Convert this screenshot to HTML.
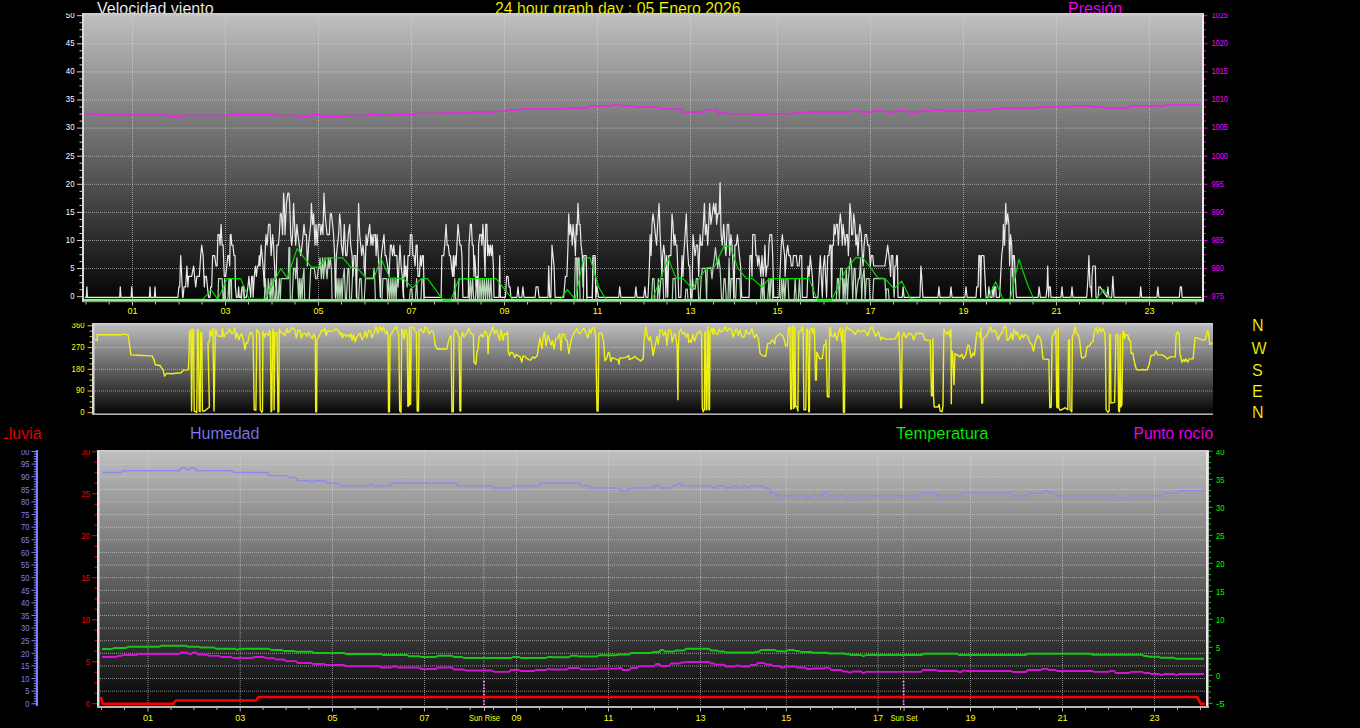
<!DOCTYPE html><html><head><meta charset="utf-8"><title>24 hour graph</title>
<style>html,body{margin:0;padding:0;background:#000;overflow:hidden}svg{display:block}text{font-family:"Liberation Sans", Arial, sans-serif}</style></head><body>
<svg width="1360" height="728" viewBox="0 0 1360 728">
<defs>
<linearGradient id="g1" x1="0" y1="0" x2="0" y2="1"><stop offset="0" stop-color="#c0c0c0"/><stop offset="1" stop-color="#030303"/></linearGradient>
<linearGradient id="g2" x1="0" y1="0" x2="0" y2="1"><stop offset="0" stop-color="#c0c0c0"/><stop offset="1" stop-color="#030303"/></linearGradient>
<linearGradient id="g3" x1="0" y1="0" x2="0" y2="1"><stop offset="0" stop-color="#c0c0c0"/><stop offset="1" stop-color="#030303"/></linearGradient>
</defs>
<rect x="0" y="0" width="1360" height="728" fill="#000"/>
<text x="97" y="13.5" fill="#fff" font-size="16" text-anchor="start"  stroke="#000" stroke-width="0.18">Velocidad viento</text>
<text x="495" y="13.5" fill="#ffff00" font-size="16" text-anchor="start" textLength="245.5" lengthAdjust="spacingAndGlyphs" stroke="#000" stroke-width="0.18">24 hour graph day : 05 Enero 2026</text>
<text x="1068" y="13.5" fill="#ff00ff" font-size="16" text-anchor="start"  stroke="#000" stroke-width="0.18">Presión</text>
<text x="-0.2" y="439" fill="#ff0000" font-size="16" text-anchor="start"  stroke="#000" stroke-width="0.18">Lluvia</text>
<rect x="0" y="420" width="4.2" height="25" fill="#000"/>
<text x="190" y="439" fill="#8080ff" font-size="16" text-anchor="start"  stroke="#000" stroke-width="0.18">Humedad</text>
<text x="896" y="439" fill="#00ff00" font-size="16" text-anchor="start" textLength="92.5" lengthAdjust="spacingAndGlyphs" stroke="#000" stroke-width="0.18">Temperatura</text>
<text x="1133.5" y="439" fill="#ff00ff" font-size="16" text-anchor="start" textLength="79.8" lengthAdjust="spacingAndGlyphs" stroke="#000" stroke-width="0.18">Punto rocío</text>
<rect x="82" y="13" width="1122" height="289" fill="url(#g1)"/>
<rect x="82" y="13" width="2" height="289" fill="#d8d8d8"/>
<rect x="1202" y="13" width="2" height="289" fill="#e8e8e8"/>
<rect x="82" y="13" width="1122" height="1.5" fill="#d0d0d0"/>
<path d="M84 15.7H1202 M84 43.8H1202 M84 71.9H1202 M84 100.0H1202 M84 128.1H1202 M84 156.2H1202 M84 184.3H1202 M84 212.4H1202 M84 240.5H1202 M84 268.6H1202" stroke="#dcdcdc" stroke-opacity="0.6" stroke-width="1" stroke-dasharray="1 1" fill="none"/>
<path d="M132.5 14V299 M225.5 14V299 M318.5 14V299 M411.5 14V299 M504.5 14V299 M597.5 14V299 M690.5 14V299 M777.5 14V299 M870.5 14V299 M963.5 14V299 M1056.5 14V299 M1149.5 14V299" stroke="#dcdcdc" stroke-opacity="0.6" stroke-width="1" stroke-dasharray="1 1" fill="none"/>
<path d="M77.0 15.7H82 M79.5 22.7H82 M79.5 29.8H82 M79.5 36.8H82 M77.0 43.8H82 M79.5 50.8H82 M79.5 57.9H82 M79.5 64.9H82 M77.0 71.9H82 M79.5 78.9H82 M79.5 86.0H82 M79.5 93.0H82 M77.0 100.0H82 M79.5 107.0H82 M79.5 114.1H82 M79.5 121.1H82 M77.0 128.1H82 M79.5 135.1H82 M79.5 142.2H82 M79.5 149.2H82 M77.0 156.2H82 M79.5 163.2H82 M79.5 170.3H82 M79.5 177.3H82 M77.0 184.3H82 M79.5 191.3H82 M79.5 198.4H82 M79.5 205.4H82 M77.0 212.4H82 M79.5 219.4H82 M79.5 226.5H82 M79.5 233.5H82 M77.0 240.5H82 M79.5 247.5H82 M79.5 254.6H82 M79.5 261.6H82 M77.0 268.6H82 M79.5 275.6H82 M79.5 282.7H82 M79.5 289.7H82 M77.0 296.7H82" stroke="#d0d0d0" stroke-width="1" fill="none"/>
<text x="74.5" y="17.8" fill="#ffffff" font-size="9" text-anchor="end" textLength="8.7" lengthAdjust="spacingAndGlyphs">50</text>
<text x="74.5" y="46.099999999999994" fill="#ffffff" font-size="9" text-anchor="end" textLength="8.7" lengthAdjust="spacingAndGlyphs">45</text>
<text x="74.5" y="74.2" fill="#ffffff" font-size="9" text-anchor="end" textLength="8.7" lengthAdjust="spacingAndGlyphs">40</text>
<text x="74.5" y="102.30000000000001" fill="#ffffff" font-size="9" text-anchor="end" textLength="8.7" lengthAdjust="spacingAndGlyphs">35</text>
<text x="74.5" y="130.4" fill="#ffffff" font-size="9" text-anchor="end" textLength="8.7" lengthAdjust="spacingAndGlyphs">30</text>
<text x="74.5" y="158.5" fill="#ffffff" font-size="9" text-anchor="end" textLength="8.7" lengthAdjust="spacingAndGlyphs">25</text>
<text x="74.5" y="186.60000000000002" fill="#ffffff" font-size="9" text-anchor="end" textLength="8.7" lengthAdjust="spacingAndGlyphs">20</text>
<text x="74.5" y="214.70000000000002" fill="#ffffff" font-size="9" text-anchor="end" textLength="8.7" lengthAdjust="spacingAndGlyphs">15</text>
<text x="74.5" y="242.8" fill="#ffffff" font-size="9" text-anchor="end" textLength="8.7" lengthAdjust="spacingAndGlyphs">10</text>
<text x="74.5" y="270.90000000000003" fill="#ffffff" font-size="9" text-anchor="end" textLength="4.3" lengthAdjust="spacingAndGlyphs">5</text>
<text x="74.5" y="299.0" fill="#ffffff" font-size="9" text-anchor="end" textLength="4.3" lengthAdjust="spacingAndGlyphs">0</text>
<path d="M1204 15.7H1207.5 M1204 22.7H1206.0 M1204 29.8H1206.0 M1204 36.8H1206.0 M1204 43.8H1207.5 M1204 50.8H1206.0 M1204 57.9H1206.0 M1204 64.9H1206.0 M1204 71.9H1207.5 M1204 78.9H1206.0 M1204 86.0H1206.0 M1204 93.0H1206.0 M1204 100.0H1207.5 M1204 107.0H1206.0 M1204 114.1H1206.0 M1204 121.1H1206.0 M1204 128.1H1207.5 M1204 135.1H1206.0 M1204 142.2H1206.0 M1204 149.2H1206.0 M1204 156.2H1207.5 M1204 163.2H1206.0 M1204 170.3H1206.0 M1204 177.3H1206.0 M1204 184.3H1207.5 M1204 191.3H1206.0 M1204 198.4H1206.0 M1204 205.4H1206.0 M1204 212.4H1207.5 M1204 219.4H1206.0 M1204 226.5H1206.0 M1204 233.5H1206.0 M1204 240.5H1207.5 M1204 247.5H1206.0 M1204 254.6H1206.0 M1204 261.6H1206.0 M1204 268.6H1207.5 M1204 275.6H1206.0 M1204 282.7H1206.0 M1204 289.7H1206.0 M1204 296.7H1207.5" stroke="#e000e0" stroke-width="1" fill="none"/>
<text x="1211.5" y="17.8" fill="#ff00ff" font-size="9" text-anchor="start" textLength="16.4" lengthAdjust="spacingAndGlyphs">1025</text>
<text x="1211.5" y="46.099999999999994" fill="#ff00ff" font-size="9" text-anchor="start" textLength="16.4" lengthAdjust="spacingAndGlyphs">1020</text>
<text x="1211.5" y="74.2" fill="#ff00ff" font-size="9" text-anchor="start" textLength="16.4" lengthAdjust="spacingAndGlyphs">1015</text>
<text x="1211.5" y="102.30000000000001" fill="#ff00ff" font-size="9" text-anchor="start" textLength="16.4" lengthAdjust="spacingAndGlyphs">1010</text>
<text x="1211.5" y="130.4" fill="#ff00ff" font-size="9" text-anchor="start" textLength="16.4" lengthAdjust="spacingAndGlyphs">1005</text>
<text x="1211.5" y="158.5" fill="#ff00ff" font-size="9" text-anchor="start" textLength="16.4" lengthAdjust="spacingAndGlyphs">1000</text>
<text x="1211.5" y="186.60000000000002" fill="#ff00ff" font-size="9" text-anchor="start" textLength="12.3" lengthAdjust="spacingAndGlyphs">995</text>
<text x="1211.5" y="214.70000000000002" fill="#ff00ff" font-size="9" text-anchor="start" textLength="12.3" lengthAdjust="spacingAndGlyphs">990</text>
<text x="1211.5" y="242.8" fill="#ff00ff" font-size="9" text-anchor="start" textLength="12.3" lengthAdjust="spacingAndGlyphs">985</text>
<text x="1211.5" y="270.90000000000003" fill="#ff00ff" font-size="9" text-anchor="start" textLength="12.3" lengthAdjust="spacingAndGlyphs">980</text>
<text x="1211.5" y="299.0" fill="#ff00ff" font-size="9" text-anchor="start" textLength="12.3" lengthAdjust="spacingAndGlyphs">975</text>
<rect x="40" y="0" width="40" height="13" fill="#000"/>
<rect x="1206" y="0" width="40" height="13" fill="#000"/>
<path d="M132.5 302V305.5 M225.5 302V305.5 M318.5 302V305.5 M411.5 302V305.5 M504.5 302V305.5 M597.5 302V305.5 M690.5 302V305.5 M777.5 302V305.5 M870.5 302V305.5 M963.5 302V305.5 M1056.5 302V305.5 M1149.5 302V305.5 M86.0 302V304.5 M109.2 302V304.5 M155.5 302V304.5 M179.0 302V304.5 M202.0 302V304.5 M248.5 302V304.5 M272.0 302V304.5 M295.0 302V304.5 M341.5 302V304.5 M365.0 302V304.5 M388.0 302V304.5 M434.5 302V304.5 M458.0 302V304.5 M481.0 302V304.5 M527.5 302V304.5 M551.0 302V304.5 M574.0 302V304.5 M620.5 302V304.5 M644.0 302V304.5 M667.0 302V304.5 M713.5 302V304.5 M734.5 302V304.5 M756.5 302V304.5 M800.5 302V304.5 M824.0 302V304.5 M847.0 302V304.5 M893.5 302V304.5 M917.0 302V304.5 M940.0 302V304.5 M986.5 302V304.5 M1010.0 302V304.5 M1033.0 302V304.5 M1079.5 302V304.5 M1103.0 302V304.5 M1126.0 302V304.5 M1172.5 302V304.5 M1196.0 302V304.5" stroke="#c0c0c0" stroke-width="1" fill="none"/>
<text x="132.5" y="314.3" fill="#ffff00" font-size="9" text-anchor="middle" >01</text>
<text x="225.5" y="314.3" fill="#ffff00" font-size="9" text-anchor="middle" >03</text>
<text x="318.5" y="314.3" fill="#ffff00" font-size="9" text-anchor="middle" >05</text>
<text x="411.5" y="314.3" fill="#ffff00" font-size="9" text-anchor="middle" >07</text>
<text x="504.5" y="314.3" fill="#ffff00" font-size="9" text-anchor="middle" >09</text>
<text x="597.5" y="314.3" fill="#ffff00" font-size="9" text-anchor="middle" >11</text>
<text x="690.5" y="314.3" fill="#ffff00" font-size="9" text-anchor="middle" >13</text>
<text x="777.5" y="314.3" fill="#ffff00" font-size="9" text-anchor="middle" >15</text>
<text x="870.5" y="314.3" fill="#ffff00" font-size="9" text-anchor="middle" >17</text>
<text x="963.5" y="314.3" fill="#ffff00" font-size="9" text-anchor="middle" >19</text>
<text x="1056.5" y="314.3" fill="#ffff00" font-size="9" text-anchor="middle" >21</text>
<text x="1149.5" y="314.3" fill="#ffff00" font-size="9" text-anchor="middle" >23</text>
<polyline points="86.0,114.0 99.0,114.0 101.0,115.0 169.0,115.0 171.0,116.5 181.0,116.5 183.0,115.5 227.0,115.5 229.0,114.5 274.0,114.5 276.0,115.5 297.0,115.5 299.0,116.5 309.0,116.5 311.0,114.5 319.0,114.5 321.0,116.5 344.0,116.5 346.0,115.5 367.0,115.5 369.0,114.5 379.0,114.5 381.0,115.5 389.0,115.5 391.0,114.5 414.0,114.5 416.0,113.5 437.0,113.5 439.0,113.0 471.0,113.0 473.0,112.0 494.0,112.0 496.0,111.2 507.0,111.2 509.0,110.0 519.0,110.0 521.0,109.0 564.0,109.0 566.0,108.0 587.0,108.0 589.0,106.0 611.0,106.0 613.0,105.0 621.0,105.0 623.0,106.0 634.0,106.0 636.0,107.0 657.0,107.0 659.0,109.0 681.0,109.0 683.0,112.0 704.0,112.0 706.0,110.0 716.0,110.0 718.0,113.0 727.0,113.0 729.0,113.8 749.0,113.8 751.0,114.5 767.0,114.5 769.0,113.8 792.0,113.8 794.0,113.0 802.0,113.0 804.0,112.0 849.0,112.0 851.0,111.0 859.0,111.0 861.0,112.0 871.0,112.0 873.0,111.0 884.0,111.0 886.0,112.0 894.0,112.0 896.0,111.0 907.0,111.0 909.0,112.0 919.0,112.0 921.0,111.0 931.0,111.0 933.0,110.0 942.0,110.0 944.0,111.0 977.0,111.0 979.0,110.0 989.0,110.0 991.0,109.0 1001.0,109.0 1003.0,108.0 1036.0,108.0 1038.0,107.0 1070.0,107.0 1072.0,106.0 1092.0,106.0 1094.0,107.0 1104.0,107.0 1106.0,108.0 1128.0,108.0 1130.0,106.0 1164.0,106.0 1166.0,105.0 1200.0,105.0" fill="none" stroke="#f020f0" stroke-width="1.6" stroke-linejoin="round"/>
<polyline points="85.0,299.6 170.0,299.6 217.9,299.6 218.6,278.7 222.1,278.7 223.1,299.6 224.0,299.6 224.6,278.7 225.4,299.6 227.9,299.6 228.9,278.7 229.7,299.6 230.3,278.7 231.4,278.7 231.7,299.6 241.4,299.6 242.1,289.2 243.6,289.2 244.3,299.6 264.3,299.6 265.4,278.7 266.4,299.6 267.4,299.6 268.3,278.7 269.3,289.2 270.3,299.6 271.1,278.7 272.1,299.6 273.1,278.7 274.3,299.6 275.4,299.6 276.4,278.7 277.1,299.6 278.3,299.6 279.3,278.7 280.3,299.6 281.1,278.7 287.1,278.7 288.3,278.7 288.9,247.5 289.7,247.5 290.3,299.6 292.1,299.6 293.6,268.3 295.0,268.3 295.7,278.7 296.9,257.9 297.6,278.7 298.6,299.6 299.3,278.7 300.3,299.6 301.1,278.7 302.1,299.6 302.9,278.7 304.0,268.3 304.6,299.6 305.7,299.6 309.3,299.6 310.7,268.3 314.3,268.3 315.7,278.7 317.1,278.7 318.3,268.3 319.3,268.3 320.0,257.9 321.4,278.7 322.6,257.9 323.6,278.7 325.0,257.9 326.0,268.3 327.1,278.7 328.3,257.9 329.3,268.3 330.3,257.9 331.4,268.3 332.1,299.6 335.7,299.6 336.9,278.7 337.9,299.6 338.9,278.7 340.0,299.6 341.1,278.7 342.1,299.6 343.1,278.7 344.3,268.3 345.4,299.6 346.4,299.6 347.9,268.3 348.9,268.3 349.7,299.6 351.4,299.6 352.9,268.3 355.7,268.3 357.1,299.6 358.6,299.6 359.7,278.7 361.1,278.7 362.1,299.6 364.0,299.6 364.3,299.6 365.4,278.7 373.3,278.7 374.0,268.3 374.7,278.7 375.4,299.6 381.9,299.6 382.9,278.7 386.9,278.7 387.6,299.6 388.6,278.7 389.7,299.6 390.9,278.7 391.9,299.6 392.9,278.7 394.0,299.6 395.1,278.7 396.1,299.6 397.1,278.7 402.6,278.7 404.0,299.6 409.4,299.6 410.4,289.2 411.9,289.2 412.6,299.6 415.4,299.6 416.6,278.7 417.6,299.6 420.9,299.6 421.9,278.7 423.3,278.7 424.0,299.6 454.0,299.6 454.7,278.7 455.7,299.6 458.0,299.6 459.0,278.7 468.3,278.7 469.4,299.6 470.4,278.7 471.4,299.6 472.6,278.7 473.7,299.6 475.4,299.6 476.6,278.7 477.6,299.6 479.0,299.6 480.0,278.7 481.1,299.6 482.3,278.7 483.3,299.6 484.3,278.7 485.4,299.6 486.6,278.7 487.6,299.6 488.6,278.7 489.7,299.6 490.9,278.7 491.9,299.6 548.0,299.6 574.4,299.6 575.4,257.9 576.6,257.9 577.3,299.6 578.0,257.9 579.1,257.9 580.1,299.6 583.4,299.6 584.0,257.9 586.3,257.9 586.9,299.6 592.3,299.6 593.0,257.9 595.1,257.9 595.9,299.6 651.6,299.6 652.6,278.7 654.0,278.7 654.9,299.6 657.3,299.6 658.3,278.7 659.4,299.6 660.9,278.7 663.0,278.7 663.7,299.6 672.3,299.6 673.0,278.7 675.1,278.7 675.9,299.6 685.1,299.6 685.9,289.2 687.3,289.2 688.0,299.6 691.6,299.6 692.6,278.7 693.7,289.2 695.1,289.2 696.3,278.7 697.7,278.7 698.7,299.6 700.1,299.6 701.1,278.7 702.3,268.3 705.4,268.3 706.6,299.6 707.3,268.3 710.9,268.3 712.0,278.7 713.0,268.3 714.4,257.9 715.4,247.5 716.6,257.9 717.7,268.3 718.7,257.9 720.1,268.3 721.6,299.6 723.0,299.6 724.0,278.7 725.1,278.7 726.3,299.6 728.0,299.6 729.1,257.9 730.1,299.6 731.1,278.7 732.0,278.7 732.0,278.7 733.1,278.7 733.7,299.6 735.6,299.6 736.6,278.7 739.9,278.7 740.6,299.6 760.6,299.6 761.7,278.7 762.7,299.6 763.7,278.7 764.6,299.6 767.7,299.6 768.9,278.7 769.9,299.6 770.9,278.7 772.0,278.7 772.7,299.6 780.6,299.6 781.7,278.7 782.7,299.6 783.7,278.7 784.9,299.6 786.0,278.7 788.0,278.7 788.9,299.6 794.1,299.6 795.1,278.7 796.3,299.6 798.4,299.6 799.4,278.7 800.6,299.6 836.3,299.6 837.4,278.7 838.4,278.7 839.4,299.6 840.6,268.3 842.3,268.3 843.1,299.6 844.1,278.7 845.1,299.6 846.3,268.3 847.4,299.6 848.4,278.7 849.4,268.3 850.6,257.9 851.7,268.3 852.7,299.6 854.1,268.3 855.1,268.3 856.0,299.6 857.0,289.2 858.4,278.7 859.4,278.7 860.6,257.9 861.7,299.6 862.7,278.7 864.1,268.3 865.1,299.6 866.3,278.7 869.1,278.7 869.9,299.6 872.7,299.6 873.7,278.7 884.9,278.7 886.0,299.6 886.3,289.2 888.4,289.2 889.1,299.6 916.0,299.6 1010.3,299.6 1011.0,268.3 1012.9,268.3 1013.4,299.6 1100.0,299.6 1201.4,299.6" fill="none" stroke="#d0f4d0" stroke-width="1.2" stroke-linejoin="round" stroke-opacity="0.88"/>
<polyline points="85.0,297.3 86.3,297.3 86.9,286.9 87.4,297.3 119.7,297.3 120.3,286.9 121.0,297.3 131.1,297.3 131.7,286.9 132.4,297.3 149.4,297.3 150.0,286.9 150.6,297.3 154.4,297.3 155.0,286.9 155.6,297.3 165.7,297.3 170.0,297.3 177.9,297.3 178.9,286.9 179.7,286.9 180.7,255.6 181.7,276.4 182.6,297.3 183.1,297.3 184.0,286.9 185.7,286.9 186.9,266.0 187.9,286.9 188.6,276.4 190.0,276.4 191.1,276.4 191.7,276.4 193.6,266.0 194.6,276.4 195.7,286.9 196.9,276.4 199.3,276.4 200.7,255.6 201.7,245.2 203.1,255.6 204.3,286.9 205.0,276.4 206.4,276.4 207.4,286.9 208.6,297.3 210.0,297.3 210.7,286.9 211.7,286.9 212.6,255.6 214.6,255.6 216.0,266.0 217.1,266.0 217.9,234.7 219.3,234.7 220.0,245.2 221.1,224.3 222.1,245.2 223.1,245.2 224.3,276.4 225.7,276.4 227.9,255.6 228.9,255.6 229.7,266.0 230.3,234.7 231.1,234.7 231.7,245.2 232.9,245.2 234.0,255.6 235.0,255.6 235.4,286.9 236.4,297.3 237.9,297.3 238.6,286.9 239.3,297.3 240.7,297.3 242.1,286.9 243.6,286.9 244.3,297.3 246.4,297.3 247.9,286.9 248.9,276.4 249.7,286.9 250.7,297.3 251.7,276.4 252.6,276.4 253.1,297.3 254.3,276.4 255.4,266.0 256.4,276.4 257.4,266.0 258.6,266.0 259.3,255.6 260.0,266.0 261.1,245.2 262.1,255.6 263.1,266.0 264.3,286.9 265.0,255.6 266.0,234.7 267.1,245.2 268.6,224.3 270.0,224.3 271.1,255.6 272.6,234.7 273.6,245.2 275.0,276.4 276.0,286.9 276.9,245.2 278.3,245.2 279.3,234.7 280.3,213.9 281.4,213.9 282.6,234.7 283.6,193.0 284.3,203.4 285.0,234.7 286.4,203.4 287.9,193.0 288.9,193.0 289.7,203.4 290.7,234.7 291.7,245.2 292.6,234.7 293.6,203.4 294.6,224.3 295.7,245.2 296.9,224.3 297.9,234.7 299.3,245.2 300.7,255.6 302.1,245.2 303.1,234.7 304.0,224.3 305.0,234.7 306.4,234.7 307.4,266.0 308.6,245.2 310.7,224.3 311.4,203.4 312.6,224.3 313.6,213.9 315.0,245.2 316.0,224.3 317.1,245.2 318.3,224.3 320.0,224.3 320.7,234.7 322.1,224.3 322.9,234.7 324.0,193.0 325.0,213.9 326.0,224.3 327.1,234.7 329.3,234.7 330.3,213.9 331.4,213.9 332.6,224.3 333.6,234.7 334.6,255.6 335.4,297.3 336.4,255.6 337.4,245.2 338.6,234.7 339.7,213.9 340.7,224.3 341.4,245.2 342.9,255.6 344.3,224.3 345.7,255.6 346.9,255.6 348.3,234.7 349.7,224.3 350.7,245.2 352.1,255.6 352.9,276.4 354.0,255.6 355.7,255.6 356.4,297.3 357.4,255.6 358.6,203.4 359.7,234.7 360.7,245.2 361.7,255.6 362.9,245.2 364.0,255.6 364.0,266.0 365.1,276.4 366.1,234.7 367.1,245.2 368.3,234.7 369.7,224.3 370.9,245.2 371.9,234.7 372.9,245.2 374.0,234.7 375.4,234.7 376.1,255.6 377.1,234.7 378.3,255.6 379.4,276.4 380.4,297.3 381.4,255.6 382.6,245.2 384.0,234.7 385.1,255.6 386.1,255.6 387.6,266.0 389.0,276.4 390.4,245.2 391.4,245.2 392.6,255.6 393.7,245.2 394.7,255.6 396.9,255.6 398.0,286.9 399.0,266.0 400.0,245.2 401.1,266.0 402.3,276.4 403.3,297.3 404.3,255.6 405.1,276.4 406.1,266.0 407.1,286.9 408.0,255.6 409.7,255.6 410.4,234.7 411.9,234.7 412.9,255.6 414.0,255.6 415.1,266.0 416.1,245.2 417.1,245.2 418.0,276.4 419.4,276.4 420.4,255.6 421.4,266.0 422.3,255.6 423.3,255.6 424.3,297.3 441.1,297.3 441.9,255.6 443.7,255.6 444.7,245.2 446.1,224.3 447.1,245.2 448.3,245.2 449.4,255.6 450.4,255.6 451.4,266.0 452.6,276.4 453.3,255.6 454.0,276.4 455.1,255.6 456.1,266.0 456.9,245.2 458.0,224.3 459.0,234.7 460.0,245.2 461.1,245.2 461.9,255.6 462.9,297.3 468.3,297.3 469.0,245.2 470.4,224.3 471.4,224.3 472.3,245.2 473.3,245.2 474.0,276.4 474.7,255.6 475.4,266.0 476.1,286.9 477.1,276.4 478.0,297.3 478.6,245.2 479.7,234.7 481.1,234.7 481.9,245.2 482.9,224.3 484.0,245.2 485.1,276.4 485.7,224.3 486.9,224.3 487.6,255.6 488.6,245.2 489.4,255.6 490.4,245.2 491.4,255.6 492.3,245.2 493.3,266.0 494.0,297.3 499.0,297.3 499.7,255.6 500.4,297.3 505.4,297.3 506.6,276.4 508.0,276.4 509.0,286.9 510.0,286.9 510.9,297.3 516.9,297.3 518.0,286.9 519.0,297.3 521.9,297.3 522.9,286.9 524.0,297.3 535.1,297.3 536.1,286.9 538.0,286.9 539.0,297.3 548.0,297.3 548.7,266.0 549.7,297.3 550.9,297.3 552.0,245.2 553.0,255.6 554.0,266.0 555.1,297.3 563.7,297.3 565.4,276.4 566.9,276.4 568.0,245.2 568.7,213.9 569.7,234.7 570.6,224.3 571.6,234.7 572.3,245.2 573.0,224.3 574.0,234.7 574.9,245.2 575.4,255.6 576.3,224.3 576.9,234.7 578.0,203.4 579.1,224.3 580.1,224.3 581.1,245.2 582.3,255.6 583.0,286.9 583.7,255.6 586.3,255.6 586.9,297.3 592.3,297.3 593.0,255.6 595.1,255.6 595.9,297.3 596.9,286.9 598.7,297.3 618.7,297.3 619.7,286.9 620.9,297.3 634.9,297.3 635.9,286.9 636.9,297.3 643.7,297.3 644.9,286.9 645.9,297.3 648.0,297.3 649.4,266.0 650.1,234.7 651.1,255.6 652.0,224.3 653.0,213.9 654.4,224.3 655.4,234.7 656.6,245.2 657.7,224.3 659.1,203.4 660.1,234.7 661.1,255.6 662.0,276.4 662.6,255.6 663.7,245.2 664.9,255.6 665.9,297.3 666.6,255.6 667.7,297.3 668.7,255.6 670.9,255.6 672.0,213.9 673.0,224.3 674.0,245.2 674.9,234.7 675.9,245.2 676.9,245.2 677.7,266.0 678.7,297.3 680.9,297.3 682.0,255.6 683.0,276.4 683.7,255.6 685.1,234.7 686.3,213.9 687.3,245.2 688.7,266.0 689.7,266.0 690.6,297.3 692.0,297.3 693.0,234.7 694.0,245.2 695.1,255.6 696.3,245.2 697.7,245.2 698.7,276.4 700.1,234.7 701.1,245.2 702.3,245.2 703.4,224.3 704.4,203.4 705.4,234.7 706.6,224.3 707.7,245.2 708.7,224.3 709.7,203.4 710.9,224.3 712.3,213.9 713.7,203.4 714.9,213.9 715.9,203.4 716.6,224.3 717.7,213.9 719.1,213.9 720.1,182.6 721.1,234.7 722.3,245.2 723.7,224.3 724.9,245.2 725.9,255.6 727.3,224.3 728.7,224.3 729.7,255.6 730.9,234.7 732.0,245.2 732.0,245.2 733.1,266.0 734.1,297.3 734.9,245.2 736.3,245.2 737.4,234.7 738.4,245.2 739.4,255.6 740.6,266.0 741.7,297.3 749.1,297.3 749.9,255.6 751.3,255.6 752.0,276.4 752.7,234.7 754.9,234.7 756.0,255.6 757.0,255.6 757.7,266.0 758.9,255.6 759.9,266.0 760.9,276.4 762.0,255.6 763.1,276.4 764.1,266.0 764.9,245.2 766.0,276.4 767.0,266.0 768.0,266.0 768.9,245.2 769.9,234.7 771.7,234.7 772.7,255.6 773.7,297.3 779.1,297.3 780.3,266.0 781.3,245.2 782.3,234.7 783.4,245.2 784.6,255.6 785.1,276.4 786.3,255.6 787.7,245.2 788.9,255.6 790.3,255.6 791.3,266.0 792.7,266.0 793.4,255.6 796.3,255.6 797.4,266.0 799.1,266.0 799.9,255.6 801.7,255.6 802.3,297.3 807.0,297.3 808.0,266.0 809.1,276.4 810.3,255.6 811.3,266.0 812.3,276.4 813.4,297.3 818.0,297.3 819.1,276.4 820.3,255.6 821.3,276.4 822.3,297.3 823.4,266.0 824.6,255.6 825.6,276.4 826.6,297.3 827.7,255.6 828.9,255.6 829.9,245.2 830.9,245.2 831.7,297.3 832.3,245.2 833.4,245.2 834.1,224.3 835.1,234.7 836.3,224.3 837.4,224.3 838.4,245.2 839.4,224.3 840.3,213.9 841.3,224.3 842.3,245.2 843.1,224.3 844.1,234.7 845.1,245.2 846.3,234.7 847.4,234.7 848.4,255.6 849.1,234.7 849.9,203.4 850.9,213.9 851.7,234.7 852.7,234.7 853.7,213.9 854.9,224.3 856.0,245.2 857.0,234.7 858.0,255.6 859.1,234.7 859.9,224.3 861.3,234.7 862.3,255.6 863.1,266.0 864.1,245.2 865.1,234.7 866.6,234.7 867.7,245.2 869.1,245.2 870.3,266.0 871.3,255.6 872.7,255.6 873.7,266.0 884.9,266.0 886.3,255.6 887.7,245.2 888.9,255.6 889.9,266.0 890.6,276.4 891.3,255.6 892.7,255.6 893.4,276.4 894.1,297.3 894.9,266.0 896.0,266.0 896.6,255.6 897.4,255.6 898.0,297.3 902.3,297.3 903.1,286.9 904.1,297.3 916.0,297.3 920.0,297.3 920.9,266.0 921.7,276.4 922.9,297.3 938.0,297.3 938.9,286.9 940.0,297.3 950.0,297.3 951.0,286.9 952.0,297.3 964.9,297.3 966.0,286.9 967.1,297.3 976.0,297.3 976.7,286.9 978.1,286.9 978.9,255.6 980.0,255.6 980.6,297.3 981.4,255.6 983.9,255.6 984.9,276.4 986.0,297.3 988.1,297.3 988.9,286.9 990.0,297.3 992.0,297.3 992.9,286.9 993.9,297.3 994.6,286.9 995.7,286.9 996.3,297.3 999.6,297.3 1000.6,276.4 1001.7,255.6 1002.9,245.2 1003.4,224.3 1004.6,245.2 1005.7,203.4 1006.7,224.3 1007.7,213.9 1008.9,224.3 1009.6,266.0 1010.6,234.7 1011.7,245.2 1012.4,276.4 1013.1,255.6 1014.3,255.6 1015.3,276.4 1016.3,297.3 1038.1,297.3 1039.1,286.9 1040.3,297.3 1046.0,297.3 1047.1,286.9 1047.7,266.0 1048.6,297.3 1049.1,286.9 1050.3,286.9 1051.0,297.3 1061.0,297.3 1062.0,286.9 1062.9,297.3 1071.0,297.3 1072.0,286.9 1072.9,297.3 1086.7,297.3 1088.1,276.4 1088.9,255.6 1090.0,286.9 1091.0,286.9 1091.7,297.3 1092.0,276.4 1092.9,266.0 1095.3,266.0 1096.0,297.3 1098.1,297.3 1098.9,286.9 1100.0,286.9 1107.1,297.3 1107.9,286.9 1108.9,297.3 1111.7,297.3 1112.9,276.4 1114.0,297.3 1140.0,297.3 1140.7,286.9 1141.7,297.3 1156.9,297.3 1157.9,286.9 1158.9,297.3 1179.3,297.3 1180.3,286.9 1181.4,286.9 1182.1,297.3 1201.4,297.3" fill="none" stroke="#e8e8e8" stroke-width="1.2" stroke-linejoin="round"/>
<polyline points="85.0,299.4 170.0,299.4 202.9,299.4 211.1,290.0 217.9,299.4 227.1,278.6 240.7,278.6 249.3,299.4 265.0,299.4 280.7,268.6 287.4,277.9 297.1,248.6 311.4,267.1 318.6,267.1 327.1,257.9 342.9,257.9 350.7,267.1 357.1,267.9 364.0,275.7 365.4,277.9 374.0,277.9 381.1,258.6 389.7,277.9 403.3,278.6 412.6,287.9 421.1,278.6 427.6,278.6 442.6,299.4 451.1,299.4 459.0,278.6 496.1,278.6 512.6,299.4 548.0,299.4 560.1,299.4 567.3,289.7 575.1,299.4 583.7,257.9 590.1,257.9 598.7,287.1 605.9,299.4 652.3,299.4 668.3,258.6 675.9,277.9 683.0,278.6 692.3,288.6 706.6,267.9 714.4,267.1 723.7,246.4 730.1,246.4 732.0,251.4 737.7,267.9 746.3,278.6 752.7,278.6 762.0,287.1 769.1,278.6 809.1,278.6 817.0,299.4 832.0,299.4 844.9,271.4 855.6,257.9 862.7,257.9 871.3,268.6 877.7,277.9 884.9,278.6 894.1,288.6 901.7,281.1 910.3,298.6 916.0,299.4 987.4,299.4 995.7,281.7 1003.1,299.4 1010.3,299.4 1018.9,259.3 1027.4,284.3 1033.9,299.4 1096.0,299.4 1100.0,294.3 1103.6,289.7 1111.1,299.4 1201.4,299.4" fill="none" stroke="#00e000" stroke-width="1.1" stroke-linejoin="round"/>
<rect x="84" y="299" width="1118" height="2.3" fill="#90ee90"/>
<rect x="82" y="301.2" width="1122" height="1" fill="#a8a8a8"/>
<path d="M442.6 300.2H451.2M817 300.2H832" stroke="#00e000" stroke-width="1.3" fill="none"/>
<rect x="92" y="323" width="1121" height="92" fill="url(#g2)"/>
<rect x="92" y="323" width="2.5" height="92" fill="#d8d8d8"/>
<rect x="92" y="323" width="1121" height="1.5" fill="#d0d0d0"/>
<rect x="92" y="413.4" width="1121" height="1.6" fill="#b0b0b0"/>
<path d="M95 347.6H1213 M95 369.3H1213 M95 391.0H1213" stroke="#dcdcdc" stroke-opacity="0.6" stroke-width="1" stroke-dasharray="1 1" fill="none"/>
<path d="M87.5 325.8H92 M89.5 331.2H92 M89.5 336.7H92 M89.5 342.1H92 M87.5 347.6H92 M89.5 353.0H92 M89.5 358.5H92 M89.5 363.9H92 M87.5 369.3H92 M89.5 374.7H92 M89.5 380.2H92 M89.5 385.6H92 M87.5 391.0H92 M89.5 396.4H92 M89.5 401.9H92 M89.5 407.3H92 M87.5 412.7H92" stroke="#d8d800" stroke-width="1" fill="none"/>
<text x="84.5" y="328.0" fill="#ffff00" font-size="9" text-anchor="end" textLength="12.9" lengthAdjust="spacingAndGlyphs">360</text>
<text x="84.5" y="349.8" fill="#ffff00" font-size="9" text-anchor="end" textLength="12.9" lengthAdjust="spacingAndGlyphs">270</text>
<text x="84.5" y="371.5" fill="#ffff00" font-size="9" text-anchor="end" textLength="12.9" lengthAdjust="spacingAndGlyphs">180</text>
<text x="84.5" y="393.2" fill="#ffff00" font-size="9" text-anchor="end" textLength="8.6" lengthAdjust="spacingAndGlyphs">90</text>
<text x="84.5" y="414.9" fill="#ffff00" font-size="9" text-anchor="end" textLength="4.3" lengthAdjust="spacingAndGlyphs">0</text>
<rect x="55" y="313" width="37" height="10" fill="#000"/>
<polyline points="95.3,339.5 97.3,340.4 97.3,334.8 121.7,334.8 123.6,333.8 128.2,335.2 130.9,354.9 137.5,355.3 152.0,355.9 154.0,359.6 155.3,364.8 159.9,365.5 163.2,370.1 164.5,376.1 166.5,373.4 171.8,373.8 181.0,372.8 183.6,370.1 188.3,369.9 188.9,359.6 189.6,331.2 190.9,329.9 191.6,411.0 192.6,329.2 193.5,329.9 194.2,411.0 196.8,412.3 197.5,329.2 198.4,329.9 199.2,411.0 200.1,411.7 200.8,332.5 201.8,333.2 202.4,411.0 204.7,411.0 209.4,407.0 208.0,342.4 209.4,341.8 210.0,330.6 211.3,335.8 212.0,333.2 212.9,328.6 214.0,411.0 215.3,330.6 216.0,329.9 217.3,335.8 221.9,336.5 222.5,328.6 223.9,337.1 225.8,333.2 227.8,332.5 229.4,329.0 231.8,333.8 233.8,331.9 234.8,327.9 235.7,338.5 237.1,333.2 239.0,339.8 240.3,335.2 241.7,333.8 243.6,341.1 245.0,349.7 246.3,342.4 247.6,343.1 249.6,333.8 251.6,332.5 253.1,337.1 254.2,409.7 255.9,410.3 256.8,329.2 258.2,331.9 259.5,333.2 260.3,409.7 261.6,412.3 262.5,411.0 262.9,331.2 264.5,337.1 265.8,333.2 268.5,335.2 269.5,330.6 270.4,333.2 271.1,411.7 271.8,411.0 272.7,329.2 273.7,331.9 274.1,409.7 274.8,333.2 276.4,332.5 277.0,333.2 278.0,412.3 278.8,411.7 279.3,329.2 280.6,332.5 283.0,333.2 284.9,335.8 286.9,328.6 288.2,332.5 289.6,331.2 292.2,327.9 294.8,329.9 296.4,337.8 298.1,329.9 300.1,331.2 301.4,338.5 302.8,334.5 304.7,333.2 306.7,336.5 308.7,331.9 310.7,337.1 312.6,338.5 314.0,333.8 315.3,337.1 315.7,411.7 316.6,411.7 317.0,339.8 318.6,337.1 321.9,329.9 323.9,331.2 324.9,327.9 326.2,335.8 327.8,330.6 330.4,331.2 334.4,330.6 335.7,328.6 338.4,330.6 340.3,334.5 341.7,332.5 342.3,337.8 344.3,333.8 346.3,336.5 348.3,334.5 349.6,337.1 350.9,333.8 352.2,340.4 353.5,334.5 355.2,341.8 356.8,337.1 358.8,334.5 360.1,333.2 362.1,339.8 364.1,335.8 365.4,331.2 366.7,337.8 368.7,330.6 370.7,331.2 372.0,337.8 374.0,333.2 376.0,326.6 377.9,333.2 379.9,326.6 381.9,331.2 383.2,327.3 385.8,333.8 387.2,330.6 388.1,337.1 388.5,411.7 389.5,411.7 390.1,335.8 392.4,331.9 395.7,326.6 397.7,330.6 398.8,334.5 399.7,411.0 401.0,412.3 401.7,329.2 403.0,330.6 404.0,339.1 405.6,329.2 407.2,334.5 407.9,406.4 408.9,405.7 409.3,327.3 410.0,404.4 410.6,404.4 411.2,327.3 412.9,326.6 414.9,330.6 416.4,332.5 417.2,411.0 418.5,411.0 419.1,329.9 420.0,329.2 421.2,329.2 422.5,331.9 423.8,332.5 425.2,326.6 427.1,329.2 429.1,333.8 430.8,331.2 432.7,331.2 433.7,333.8 435.1,345.1 437.0,349.0 446.9,349.0 448.5,341.1 450.2,336.5 451.1,335.8 451.9,411.7 453.3,411.7 453.8,333.2 455.5,329.9 457.5,333.2 459.1,337.1 459.9,411.0 460.8,411.0 461.2,337.1 462.5,331.9 463.8,337.1 465.4,334.5 466.7,333.2 468.7,328.6 470.7,333.2 473.3,334.5 474.0,362.2 475.9,364.2 477.0,351.7 477.9,349.7 479.2,337.1 481.2,334.5 483.2,337.1 484.9,331.2 486.5,333.2 487.5,337.1 488.1,353.6 488.9,337.1 490.4,333.8 492.8,326.6 494.4,333.8 496.4,329.9 498.1,335.2 499.7,340.4 501.0,329.9 503.0,340.4 504.3,333.8 506.3,334.5 507.6,331.9 508.3,351.7 509.6,355.6 510.9,352.3 512.9,353.0 514.8,357.6 516.2,354.3 518.1,355.6 520.1,356.9 521.8,362.2 522.8,356.3 524.7,356.3 526.7,358.2 528.7,359.6 530.7,360.2 532.7,356.9 534.6,358.2 537.3,355.6 538.2,349.0 539.9,337.8 541.9,348.4 543.2,337.1 544.5,331.9 546.1,345.7 547.8,335.2 549.5,339.8 551.1,345.1 552.4,340.4 554.0,349.0 555.7,339.1 557.7,337.8 559.7,333.8 561.0,350.3 562.3,333.8 564.3,334.5 565.6,339.8 567.2,340.4 568.9,353.6 570.2,345.1 571.6,338.5 574.2,332.5 576.8,328.6 578.2,332.5 580.0,333.8 581.9,330.6 583.8,328.6 585.8,332.5 587.8,337.8 589.8,329.2 591.1,333.2 592.4,327.9 594.4,327.9 595.7,337.1 597.0,411.0 598.1,411.0 598.8,333.2 601.7,333.2 603.6,341.1 604.9,360.9 606.9,358.2 608.2,352.3 609.3,353.0 610.9,361.5 612.2,357.6 615.5,358.9 618.1,360.2 619.1,364.2 619.5,358.2 625.4,357.6 628.7,355.6 629.3,359.6 632.6,358.2 634.6,356.3 636.6,358.2 640.6,360.9 643.2,358.9 644.1,341.1 645.8,326.6 647.2,335.8 649.1,340.4 650.4,336.5 651.8,344.4 653.1,355.6 655.1,345.1 657.0,336.5 658.1,344.4 660.3,329.9 662.3,330.6 663.6,335.8 665.6,331.2 666.9,345.1 668.7,329.9 670.9,330.6 672.2,342.4 674.2,333.8 675.5,334.5 677.1,346.4 677.9,399.8 678.4,346.4 679.2,331.9 680.8,329.2 682.8,333.8 684.7,332.5 686.1,337.1 688.0,333.8 688.7,342.4 690.0,339.8 691.3,342.4 692.7,334.5 694.6,341.1 696.6,334.5 699.9,330.6 701.6,334.5 702.3,408.4 703.2,411.7 704.3,409.7 704.8,332.5 705.6,331.9 706.1,409.7 706.9,409.7 707.8,326.6 708.5,333.2 708.9,409.7 709.5,409.7 710.1,332.5 711.8,327.9 713.1,334.5 714.0,327.9 715.7,333.8 717.7,334.5 719.0,329.2 721.0,331.9 723.0,330.6 725.0,326.6 726.9,331.2 729.6,327.9 731.6,330.6 733.3,337.1 735.5,329.9 736.8,329.2 738.2,335.2 740.0,329.9 741.9,337.1 744.5,336.5 745.8,329.9 747.8,333.8 749.8,333.8 751.8,328.6 754.4,337.8 756.4,334.5 758.4,338.5 760.1,353.6 762.3,355.6 765.6,356.3 767.6,343.7 770.2,343.1 772.2,339.8 774.8,343.7 775.5,337.8 777.5,335.8 780.1,333.8 782.8,335.8 784.7,341.1 785.4,345.7 787.4,345.7 788.0,331.9 789.1,326.6 790.0,327.9 790.7,409.0 791.7,409.0 792.2,325.9 793.0,326.6 793.7,408.4 794.6,407.0 794.9,326.6 795.7,406.4 796.6,406.4 797.9,411.0 798.6,331.9 800.6,331.2 802.5,326.6 803.2,333.2 803.9,409.7 805.8,409.7 806.5,329.2 807.8,329.2 808.7,411.7 809.4,411.7 809.8,330.6 811.8,327.9 813.1,333.2 814.4,328.6 815.5,380.0 816.4,380.0 816.8,352.3 819.7,358.9 822.3,358.2 823.9,345.1 825.6,344.4 826.0,339.8 826.5,359.6 827.3,396.5 828.9,397.2 829.6,327.9 830.5,327.9 831.3,335.8 833.5,336.5 834.8,332.5 836.8,340.4 838.1,334.5 840.1,327.3 841.4,337.1 842.1,342.4 842.8,328.6 843.4,412.3 844.5,412.3 845.0,331.2 846.7,326.6 848.7,329.2 850.7,329.9 852.7,331.2 855.3,334.5 857.9,329.9 860.6,331.9 862.5,330.6 865.2,331.2 867.8,335.8 869.8,329.2 871.8,326.6 873.8,331.2 875.7,336.5 878.4,331.9 881.0,339.8 882.3,337.1 885.6,339.1 894.9,339.1 897.5,334.5 898.8,331.9 900.0,360.9 900.6,407.7 901.6,407.7 902.1,337.1 903.8,332.5 905.8,337.8 909.1,333.2 911.8,334.5 913.7,339.8 915.7,333.8 919.0,333.2 922.3,333.2 924.9,339.8 930.2,340.4 931.5,395.8 932.5,395.8 932.9,338.5 933.5,395.8 934.2,407.0 938.1,407.0 939.1,404.4 940.1,411.0 942.1,411.7 943.0,405.7 943.8,329.2 946.7,334.5 948.7,331.2 950.0,337.1 950.9,329.2 951.3,403.7 951.7,351.0 952.6,351.7 954.0,384.6 954.9,353.6 957.3,354.9 959.9,356.9 961.9,354.3 963.2,358.9 965.8,354.9 967.8,345.1 969.1,345.7 971.1,357.6 973.1,353.0 974.4,355.6 976.8,332.5 979.0,333.2 980.3,337.8 981.0,327.9 981.7,403.1 982.6,403.1 983.0,338.5 985.6,337.1 988.3,332.5 990.2,326.6 992.2,331.9 994.2,329.9 996.2,332.5 998.1,339.8 1000.1,335.2 1002.1,332.5 1004.7,325.9 1006.1,327.9 1007.1,340.4 1008.7,339.8 1010.0,337.1 1011.3,333.2 1012.7,339.8 1014.0,329.2 1016.0,334.5 1017.3,331.9 1019.9,339.8 1021.9,334.5 1023.2,337.8 1025.2,334.5 1027.8,336.5 1029.8,342.4 1031.8,344.4 1033.5,351.0 1035.1,342.4 1037.7,335.2 1039.7,337.8 1041.0,340.4 1043.0,358.9 1048.9,359.6 1049.8,407.7 1051.2,407.0 1052.0,337.1 1054.2,333.2 1055.9,329.9 1056.8,407.0 1057.5,407.7 1058.2,327.9 1058.8,407.7 1060.0,410.3 1063.2,409.0 1065.2,407.7 1067.8,409.7 1068.5,340.4 1069.5,339.8 1070.0,409.7 1071.8,411.7 1072.4,335.8 1073.7,334.5 1075.1,326.6 1076.4,333.2 1078.4,335.2 1079.7,341.1 1081.4,356.9 1082.3,358.2 1085.6,356.3 1086.9,347.0 1089.6,345.7 1091.5,342.4 1092.9,341.8 1094.2,332.5 1096.2,327.3 1097.7,333.2 1099.9,327.9 1101.2,331.9 1102.8,328.6 1104.7,332.5 1105.4,346.4 1106.1,409.7 1108.0,412.3 1109.1,411.0 1109.6,334.5 1110.4,334.5 1110.9,403.1 1114.6,402.4 1115.9,335.8 1117.0,333.8 1117.9,337.1 1118.6,411.0 1119.5,411.7 1120.2,334.5 1120.8,407.0 1121.9,404.4 1122.8,331.9 1123.9,331.2 1124.5,338.5 1125.8,334.5 1127.8,335.2 1129.1,339.8 1130.7,341.8 1131.1,353.6 1132.8,353.0 1134.4,362.2 1136.4,369.5 1139.7,370.1 1143.0,369.5 1146.9,370.1 1148.9,365.5 1150.9,355.6 1154.2,354.9 1156.2,351.0 1157.5,354.9 1162.1,354.9 1164.7,356.3 1167.4,358.9 1170.0,356.9 1175.3,356.9 1176.0,335.8 1177.3,331.9 1179.0,333.2 1179.9,353.6 1181.9,362.2 1183.9,359.6 1184.8,361.5 1185.8,358.9 1187.8,362.2 1189.1,358.9 1193.1,358.9 1195.1,337.8 1197.1,337.8 1200.3,339.1 1203.6,340.4 1205.6,339.1 1207.2,331.2 1208.3,331.9 1209.8,344.4 1211.6,343.7 1212.5,342.4" fill="none" stroke="#f0f018" stroke-width="1.4" stroke-linejoin="round"/>
<text x="1252" y="330.5" fill="#ffff00" font-size="16" text-anchor="start"  stroke="#000" stroke-width="0.18">N</text>
<text x="1251.4" y="353.6" fill="#ffff00" font-size="16" text-anchor="start"  stroke="#000" stroke-width="0.18">W</text>
<text x="1252" y="375.5" fill="#ffff00" font-size="16" text-anchor="start"  stroke="#000" stroke-width="0.18">S</text>
<text x="1252" y="397" fill="#ffff00" font-size="16" text-anchor="start"  stroke="#000" stroke-width="0.18">E</text>
<text x="1252" y="417.5" fill="#ffff00" font-size="16" text-anchor="start"  stroke="#000" stroke-width="0.18">N</text>
<rect x="97" y="450" width="1112" height="258" fill="url(#g3)"/>
<rect x="97" y="450" width="2.5" height="258" fill="#e0e0e0"/>
<rect x="1206" y="450" width="2.5" height="258" fill="#e8e8e8"/>
<rect x="97" y="450" width="1112" height="1.5" fill="#d0d0d0"/>
<rect x="97" y="706.0" width="1112" height="2" fill="#b8b8b8"/>
<path d="M100 691.14H1206 M100 678.53H1206 M100 665.92H1206 M100 653.31H1206 M100 640.70H1206 M100 628.09H1206 M100 615.48H1206 M100 602.87H1206 M100 590.26H1206 M100 577.65H1206 M100 565.04H1206 M100 552.43H1206 M100 539.82H1206 M100 527.21H1206 M100 514.60H1206 M100 501.99H1206 M100 489.38H1206 M100 476.77H1206 M100 464.16H1206" stroke="#dcdcdc" stroke-opacity="0.6" stroke-width="1" stroke-dasharray="1 1" fill="none"/>
<path d="M148.0 452V706 M240.2 452V706 M332.4 452V706 M424.5 452V706 M516.5 452V706 M608.5 452V706 M700.5 452V706 M786.3 452V706 M878.0 452V706 M970.5 452V706 M1062.5 452V706 M1154.5 452V706 M483.8 452V706 M903.6 452V706" stroke="#dcdcdc" stroke-opacity="0.6" stroke-width="1" stroke-dasharray="1 1" fill="none"/>
<rect x="35.8" y="450" width="2.2" height="256" fill="#8080ff"/>
<path d="M31.5 703.75H36 M33.8 701.23H36 M33.8 698.71H36 M33.8 696.18H36 M33.8 693.66H36 M31.5 691.14H36 M33.8 688.62H36 M33.8 686.09H36 M33.8 683.57H36 M33.8 681.05H36 M31.5 678.52H36 M33.8 676.00H36 M33.8 673.48H36 M33.8 670.96H36 M33.8 668.43H36 M31.5 665.91H36 M33.8 663.39H36 M33.8 660.87H36 M33.8 658.35H36 M33.8 655.82H36 M31.5 653.30H36 M33.8 650.78H36 M33.8 648.25H36 M33.8 645.73H36 M33.8 643.21H36 M31.5 640.69H36 M33.8 638.16H36 M33.8 635.64H36 M33.8 633.12H36 M33.8 630.60H36 M31.5 628.08H36 M33.8 625.55H36 M33.8 623.03H36 M33.8 620.51H36 M33.8 617.99H36 M31.5 615.46H36 M33.8 612.94H36 M33.8 610.42H36 M33.8 607.89H36 M33.8 605.37H36 M31.5 602.85H36 M33.8 600.33H36 M33.8 597.81H36 M33.8 595.28H36 M33.8 592.76H36 M31.5 590.24H36 M33.8 587.72H36 M33.8 585.19H36 M33.8 582.67H36 M33.8 580.15H36 M31.5 577.62H36 M33.8 575.10H36 M33.8 572.58H36 M33.8 570.06H36 M33.8 567.53H36 M31.5 565.01H36 M33.8 562.49H36 M33.8 559.97H36 M33.8 557.44H36 M33.8 554.92H36 M31.5 552.40H36 M33.8 549.88H36 M33.8 547.36H36 M33.8 544.83H36 M33.8 542.31H36 M31.5 539.79H36 M33.8 537.26H36 M33.8 534.74H36 M33.8 532.22H36 M33.8 529.70H36 M31.5 527.17H36 M33.8 524.65H36 M33.8 522.13H36 M33.8 519.61H36 M33.8 517.09H36 M31.5 514.56H36 M33.8 512.04H36 M33.8 509.52H36 M33.8 507.00H36 M33.8 504.47H36 M31.5 501.95H36 M33.8 499.43H36 M33.8 496.90H36 M33.8 494.38H36 M33.8 491.86H36 M31.5 489.34H36 M33.8 486.81H36 M33.8 484.29H36 M33.8 481.77H36 M33.8 479.25H36 M31.5 476.73H36 M33.8 474.20H36 M33.8 471.68H36 M33.8 469.16H36 M33.8 466.63H36 M31.5 464.11H36 M33.8 461.59H36 M33.8 459.07H36 M33.8 456.55H36 M33.8 454.02H36 M31.5 451.50H36" stroke="#8080ff" stroke-width="1" fill="none"/>
<text x="29.5" y="707.05" fill="#8080ff" font-size="9" text-anchor="end" textLength="4.2" lengthAdjust="spacingAndGlyphs">0</text>
<text x="29.5" y="694.4375" fill="#8080ff" font-size="9" text-anchor="end" textLength="4.2" lengthAdjust="spacingAndGlyphs">5</text>
<text x="29.5" y="681.8249999999999" fill="#8080ff" font-size="9" text-anchor="end" textLength="8.4" lengthAdjust="spacingAndGlyphs">10</text>
<text x="29.5" y="669.2125" fill="#8080ff" font-size="9" text-anchor="end" textLength="8.4" lengthAdjust="spacingAndGlyphs">15</text>
<text x="29.5" y="656.5999999999999" fill="#8080ff" font-size="9" text-anchor="end" textLength="8.4" lengthAdjust="spacingAndGlyphs">20</text>
<text x="29.5" y="643.9875" fill="#8080ff" font-size="9" text-anchor="end" textLength="8.4" lengthAdjust="spacingAndGlyphs">25</text>
<text x="29.5" y="631.375" fill="#8080ff" font-size="9" text-anchor="end" textLength="8.4" lengthAdjust="spacingAndGlyphs">30</text>
<text x="29.5" y="618.7624999999999" fill="#8080ff" font-size="9" text-anchor="end" textLength="8.4" lengthAdjust="spacingAndGlyphs">35</text>
<text x="29.5" y="606.15" fill="#8080ff" font-size="9" text-anchor="end" textLength="8.4" lengthAdjust="spacingAndGlyphs">40</text>
<text x="29.5" y="593.5374999999999" fill="#8080ff" font-size="9" text-anchor="end" textLength="8.4" lengthAdjust="spacingAndGlyphs">45</text>
<text x="29.5" y="580.925" fill="#8080ff" font-size="9" text-anchor="end" textLength="8.4" lengthAdjust="spacingAndGlyphs">50</text>
<text x="29.5" y="568.3125" fill="#8080ff" font-size="9" text-anchor="end" textLength="8.4" lengthAdjust="spacingAndGlyphs">55</text>
<text x="29.5" y="555.6999999999999" fill="#8080ff" font-size="9" text-anchor="end" textLength="8.4" lengthAdjust="spacingAndGlyphs">60</text>
<text x="29.5" y="543.0875" fill="#8080ff" font-size="9" text-anchor="end" textLength="8.4" lengthAdjust="spacingAndGlyphs">65</text>
<text x="29.5" y="530.4749999999999" fill="#8080ff" font-size="9" text-anchor="end" textLength="8.4" lengthAdjust="spacingAndGlyphs">70</text>
<text x="29.5" y="517.8625" fill="#8080ff" font-size="9" text-anchor="end" textLength="8.4" lengthAdjust="spacingAndGlyphs">75</text>
<text x="29.5" y="505.25" fill="#8080ff" font-size="9" text-anchor="end" textLength="8.4" lengthAdjust="spacingAndGlyphs">80</text>
<text x="29.5" y="492.6375" fill="#8080ff" font-size="9" text-anchor="end" textLength="8.4" lengthAdjust="spacingAndGlyphs">85</text>
<text x="29.5" y="480.02500000000003" fill="#8080ff" font-size="9" text-anchor="end" textLength="8.4" lengthAdjust="spacingAndGlyphs">90</text>
<text x="29.5" y="467.4125" fill="#8080ff" font-size="9" text-anchor="end" textLength="8.4" lengthAdjust="spacingAndGlyphs">95</text>
<text x="29.5" y="454.8" fill="#8080ff" font-size="9" text-anchor="end" textLength="12.6" lengthAdjust="spacingAndGlyphs">100</text>
<rect x="0" y="440" width="32" height="10" fill="#000"/>
<rect x="0" y="446" width="20.8" height="12" fill="#000"/>
<path d="M92 703.75H97 M92 661.75H97 M92 619.75H97 M92 577.75H97 M92 535.75H97 M92 493.75H97 M92 451.75H97 M94.5 693.25H97 M94.5 682.75H97 M94.5 672.25H97 M94.5 651.25H97 M94.5 640.75H97 M94.5 630.25H97 M94.5 609.25H97 M94.5 598.75H97 M94.5 588.25H97 M94.5 567.25H97 M94.5 556.75H97 M94.5 546.25H97 M94.5 525.25H97 M94.5 514.75H97 M94.5 504.25H97 M94.5 483.25H97 M94.5 472.75H97 M94.5 462.25H97" stroke="#ff0000" stroke-width="1" fill="none"/>
<text x="90" y="707.05" fill="#ff0000" font-size="9" text-anchor="end" textLength="4.2" lengthAdjust="spacingAndGlyphs">0</text>
<text x="90" y="665.05" fill="#ff0000" font-size="9" text-anchor="end" textLength="4.2" lengthAdjust="spacingAndGlyphs">5</text>
<text x="90" y="623.05" fill="#ff0000" font-size="9" text-anchor="end" textLength="8.4" lengthAdjust="spacingAndGlyphs">10</text>
<text x="90" y="581.05" fill="#ff0000" font-size="9" text-anchor="end" textLength="8.4" lengthAdjust="spacingAndGlyphs">15</text>
<text x="90" y="539.05" fill="#ff0000" font-size="9" text-anchor="end" textLength="8.4" lengthAdjust="spacingAndGlyphs">20</text>
<text x="90" y="497.05" fill="#ff0000" font-size="9" text-anchor="end" textLength="8.4" lengthAdjust="spacingAndGlyphs">25</text>
<text x="90" y="455.05" fill="#ff0000" font-size="9" text-anchor="end" textLength="8.4" lengthAdjust="spacingAndGlyphs">30</text>
<path d="M1209 703.30H1212.5 M1209 697.70H1211.0 M1209 692.10H1211.0 M1209 686.50H1211.0 M1209 680.90H1211.0 M1209 675.30H1212.5 M1209 669.70H1211.0 M1209 664.10H1211.0 M1209 658.50H1211.0 M1209 652.90H1211.0 M1209 647.30H1212.5 M1209 641.70H1211.0 M1209 636.10H1211.0 M1209 630.50H1211.0 M1209 624.90H1211.0 M1209 619.30H1212.5 M1209 613.70H1211.0 M1209 608.10H1211.0 M1209 602.50H1211.0 M1209 596.90H1211.0 M1209 591.30H1212.5 M1209 585.70H1211.0 M1209 580.10H1211.0 M1209 574.50H1211.0 M1209 568.90H1211.0 M1209 563.30H1212.5 M1209 557.70H1211.0 M1209 552.10H1211.0 M1209 546.50H1211.0 M1209 540.90H1211.0 M1209 535.30H1212.5 M1209 529.70H1211.0 M1209 524.10H1211.0 M1209 518.50H1211.0 M1209 512.90H1211.0 M1209 507.30H1212.5 M1209 501.70H1211.0 M1209 496.10H1211.0 M1209 490.50H1211.0 M1209 484.90H1211.0 M1209 479.30H1212.5 M1209 473.70H1211.0 M1209 468.10H1211.0 M1209 462.50H1211.0 M1209 456.90H1211.0 M1209 451.30H1212.5" stroke="#00d000" stroke-width="1" fill="none"/>
<text x="1216" y="706.5999999999999" fill="#00ff00" font-size="9" text-anchor="start" textLength="8.4" lengthAdjust="spacingAndGlyphs">-5</text>
<text x="1216" y="678.5999999999999" fill="#00ff00" font-size="9" text-anchor="start" textLength="4.2" lengthAdjust="spacingAndGlyphs">0</text>
<text x="1216" y="650.5999999999999" fill="#00ff00" font-size="9" text-anchor="start" textLength="4.2" lengthAdjust="spacingAndGlyphs">5</text>
<text x="1216" y="622.5999999999999" fill="#00ff00" font-size="9" text-anchor="start" textLength="8.4" lengthAdjust="spacingAndGlyphs">10</text>
<text x="1216" y="594.5999999999999" fill="#00ff00" font-size="9" text-anchor="start" textLength="8.4" lengthAdjust="spacingAndGlyphs">15</text>
<text x="1216" y="566.5999999999999" fill="#00ff00" font-size="9" text-anchor="start" textLength="8.4" lengthAdjust="spacingAndGlyphs">20</text>
<text x="1216" y="538.5999999999999" fill="#00ff00" font-size="9" text-anchor="start" textLength="8.4" lengthAdjust="spacingAndGlyphs">25</text>
<text x="1216" y="510.59999999999997" fill="#00ff00" font-size="9" text-anchor="start" textLength="8.4" lengthAdjust="spacingAndGlyphs">30</text>
<text x="1216" y="482.59999999999997" fill="#00ff00" font-size="9" text-anchor="start" textLength="8.4" lengthAdjust="spacingAndGlyphs">35</text>
<text x="1216" y="454.59999999999997" fill="#00ff00" font-size="9" text-anchor="start" textLength="8.4" lengthAdjust="spacingAndGlyphs">40</text>
<rect x="60" y="440" width="36" height="10" fill="#000"/>
<rect x="1210" y="440" width="36" height="10" fill="#000"/>
<path d="M148.0 708V711.5 M240.2 708V711.5 M332.4 708V711.5 M424.5 708V711.5 M516.5 708V711.5 M608.5 708V711.5 M700.5 708V711.5 M786.3 708V711.5 M878.0 708V711.5 M970.5 708V711.5 M1062.5 708V711.5 M1154.5 708V711.5 M101.5 708V710.0 M124.5 708V710.0 M171.0 708V710.0 M194.0 708V710.0 M217.0 708V710.0 M263.0 708V710.0 M286.0 708V710.0 M309.0 708V710.0 M355.0 708V710.0 M378.0 708V710.0 M401.0 708V710.0 M447.0 708V710.0 M470.2 708V710.0 M493.5 708V710.0 M539.5 708V710.0 M562.5 708V710.0 M585.5 708V710.0 M631.5 708V710.0 M654.5 708V710.0 M677.5 708V710.0 M723.5 708V710.0 M744.5 708V710.0 M766.5 708V710.0 M810.5 708V710.0 M832.5 708V710.0 M855.5 708V710.0 M900.5 708V710.0 M923.5 708V710.0 M947.5 708V710.0 M993.5 708V710.0 M1016.5 708V710.0 M1039.5 708V710.0 M1085.5 708V710.0 M1108.5 708V710.0 M1131.5 708V710.0 M1177.5 708V710.0 M1200.5 708V710.0" stroke="#b0b0b0" stroke-width="1" fill="none"/>
<text x="148.0" y="720.6" fill="#ffff00" font-size="9" text-anchor="middle" >01</text>
<text x="240.2" y="720.6" fill="#ffff00" font-size="9" text-anchor="middle" >03</text>
<text x="332.4" y="720.6" fill="#ffff00" font-size="9" text-anchor="middle" >05</text>
<text x="424.5" y="720.6" fill="#ffff00" font-size="9" text-anchor="middle" >07</text>
<text x="516.5" y="720.6" fill="#ffff00" font-size="9" text-anchor="middle" >09</text>
<text x="608.5" y="720.6" fill="#ffff00" font-size="9" text-anchor="middle" >11</text>
<text x="700.5" y="720.6" fill="#ffff00" font-size="9" text-anchor="middle" >13</text>
<text x="786.3" y="720.6" fill="#ffff00" font-size="9" text-anchor="middle" >15</text>
<text x="878.0" y="720.6" fill="#ffff00" font-size="9" text-anchor="middle" >17</text>
<text x="970.5" y="720.6" fill="#ffff00" font-size="9" text-anchor="middle" >19</text>
<text x="1062.5" y="720.6" fill="#ffff00" font-size="9" text-anchor="middle" >21</text>
<text x="1154.5" y="720.6" fill="#ffff00" font-size="9" text-anchor="middle" >23</text>
<text x="484.5" y="720.6" fill="#ffff00" font-size="8.5" text-anchor="middle" textLength="31" lengthAdjust="spacingAndGlyphs">Sun Rise</text>
<text x="904" y="720.6" fill="#ffff00" font-size="8.5" text-anchor="middle" textLength="27" lengthAdjust="spacingAndGlyphs">Sun Set</text>
<path d="M484.0 681V708" stroke="#ff90ff" stroke-width="1.7" stroke-dasharray="1.6 1.6" fill="none"/>
<path d="M484.5 708V711" stroke="#b0b0b0" stroke-width="1" fill="none"/>
<path d="M903.6 681V708" stroke="#ff90ff" stroke-width="1.7" stroke-dasharray="1.6 1.6" fill="none"/>
<path d="M904.1 708V711" stroke="#b0b0b0" stroke-width="1" fill="none"/>
<polyline points="102.0,472.5 121.0,472.5 123.0,470.8 179.0,470.8 181.0,468.0 186.0,468.0 188.0,470.0 189.0,470.0 191.0,468.0 195.0,468.0 197.0,470.8 232.0,470.8 234.0,472.5 267.0,472.5 269.0,475.8 287.0,475.8 289.0,477.5 296.0,477.5 298.0,480.8 310.0,480.8 312.0,483.0 312.0,483.0 314.0,480.8 325.0,480.8 327.0,483.0 338.0,483.0 340.0,485.8 369.0,485.8 371.0,483.5 371.0,483.5 373.0,485.8 390.0,485.8 392.0,483.0 456.0,483.0 458.0,485.8 492.0,485.8 494.0,488.0 511.0,488.0 513.0,485.8 518.0,485.8 520.0,488.0 520.0,488.0 522.0,485.8 539.0,485.8 541.0,483.0 579.0,483.0 581.0,485.8 589.0,485.8 591.0,488.0 619.0,488.0 621.0,490.8 628.0,490.8 630.0,488.0 653.0,488.0 655.0,485.8 659.0,485.8 661.0,488.0 671.0,488.0 673.0,485.8 677.0,485.8 679.0,483.0 680.0,483.0 682.0,485.8 711.0,485.8 713.0,488.0 716.0,488.0 718.0,485.8 724.0,485.8 726.0,488.0 731.0,488.0 733.0,486.0 736.0,486.0 738.0,488.0 741.0,488.0 743.0,485.8 746.0,485.8 748.0,488.0 749.0,488.0 751.0,485.8 762.0,485.8 764.0,488.0 769.0,488.0 771.0,493.0 776.0,493.0 778.0,495.8 806.0,495.8 808.0,497.5 810.0,497.5 812.0,495.8 822.0,495.8 824.0,493.0 827.0,493.0 829.0,495.8 844.0,495.8 846.0,498.0 852.0,498.0 854.0,495.8 919.0,495.8 921.0,493.0 936.0,493.0 938.0,495.8 960.0,495.8 962.0,493.0 1011.0,493.0 1013.0,495.8 1027.0,495.8 1029.0,493.2 1042.0,493.2 1044.0,490.8 1048.0,490.8 1050.0,493.2 1055.0,493.2 1057.0,495.8 1113.0,495.8 1115.0,498.0 1130.0,498.0 1132.0,495.8 1162.0,495.8 1164.0,493.2 1177.0,493.2 1179.0,490.8 1204.0,490.8" fill="none" stroke="#8c8cf0" stroke-width="1.6" stroke-linejoin="round"/>
<polyline points="102.0,649.0 112.0,649.0 114.0,648.0 126.0,648.0 128.0,646.8 159.0,646.8 161.0,645.8 186.0,645.8 188.0,646.8 199.0,646.8 201.0,647.5 214.0,647.5 216.0,648.8 235.0,648.8 237.0,650.0 237.0,650.0 239.0,648.8 269.0,648.8 271.0,650.0 282.0,650.0 284.0,651.0 294.0,651.0 296.0,651.8 312.0,651.8 314.0,653.0 344.0,653.0 346.0,654.0 381.0,654.0 383.0,655.0 407.0,655.0 409.0,656.2 419.0,656.2 421.0,657.0 436.0,657.0 438.0,655.8 452.0,655.8 454.0,657.0 462.0,657.0 464.0,658.0 511.0,658.0 513.0,657.0 519.0,657.0 521.0,658.0 546.0,658.0 548.0,657.0 551.0,657.0 553.0,657.3 569.0,657.3 571.0,655.8 577.0,655.8 579.0,656.5 597.0,656.5 599.0,655.2 617.0,655.2 619.0,654.5 629.0,654.5 631.0,653.0 651.0,653.0 653.0,652.0 659.0,652.0 661.0,650.0 663.0,650.0 665.0,651.5 674.0,651.5 676.0,650.5 684.0,650.5 686.0,648.8 709.0,648.8 711.0,650.5 717.0,650.5 719.0,651.5 724.0,651.5 726.0,652.5 754.0,652.5 756.0,651.8 759.0,651.8 761.0,650.0 775.0,650.0 777.0,651.2 786.0,651.2 788.0,650.0 794.0,650.0 796.0,651.0 799.0,651.0 801.0,652.0 811.0,652.0 813.0,652.7 827.0,652.7 829.0,653.5 844.0,653.5 846.0,654.2 849.0,654.2 851.0,655.0 861.0,655.0 863.0,656.0 864.0,656.0 866.0,655.0 922.0,655.0 924.0,653.8 957.0,653.8 959.0,655.0 1026.0,655.0 1028.0,653.8 1091.0,653.8 1093.0,654.8 1142.0,654.8 1144.0,656.0 1147.0,656.0 1149.0,656.8 1159.0,656.8 1161.0,657.8 1174.0,657.8 1176.0,658.8 1204.0,658.8" fill="none" stroke="#18c418" stroke-width="1.9" stroke-linejoin="round"/>
<polyline points="102.0,657.0 116.0,657.0 118.0,656.0 121.0,656.0 123.0,655.0 137.0,655.0 139.0,654.0 179.0,654.0 181.0,652.5 187.0,652.5 189.0,654.0 191.0,654.0 193.0,652.5 196.0,652.5 198.0,654.5 207.0,654.5 209.0,655.8 219.0,655.8 221.0,657.0 231.0,657.0 233.0,658.0 252.0,658.0 254.0,657.0 264.0,657.0 266.0,658.2 274.0,658.2 276.0,659.5 284.0,659.5 286.0,661.2 296.0,661.2 298.0,663.0 311.0,663.0 313.0,664.0 324.0,664.0 326.0,665.0 344.0,665.0 346.0,666.2 379.0,666.2 381.0,667.5 391.0,667.5 393.0,666.5 396.0,666.5 398.0,667.5 419.0,667.5 421.0,669.0 436.0,669.0 438.0,667.5 452.0,667.5 454.0,669.5 464.0,669.5 466.0,670.5 492.0,670.5 494.0,671.8 509.0,671.8 511.0,670.0 519.0,670.0 521.0,671.0 534.0,671.0 536.0,670.0 546.0,670.0 548.0,669.0 549.0,669.0 551.0,669.5 567.0,669.5 569.0,668.0 579.0,668.0 581.0,669.3 597.0,669.3 599.0,668.7 617.0,668.7 619.0,668.0 621.0,668.0 623.0,670.0 629.0,670.0 631.0,668.0 637.0,668.0 639.0,666.2 654.0,666.2 656.0,664.0 659.0,664.0 661.0,666.0 669.0,666.0 671.0,663.5 679.0,663.5 681.0,662.5 685.0,662.5 687.0,662.0 709.0,662.0 711.0,663.5 714.0,663.5 716.0,664.7 724.0,664.7 726.0,666.5 734.0,666.5 736.0,665.5 739.0,665.5 741.0,666.5 749.0,666.5 751.0,665.0 756.0,665.0 758.0,663.0 764.0,663.0 766.0,664.5 771.0,664.5 773.0,666.0 779.0,666.0 781.0,667.5 784.0,667.5 786.0,666.5 795.0,666.5 797.0,667.5 805.0,667.5 807.0,669.0 811.0,669.0 813.0,668.5 824.0,668.5 826.0,667.7 829.0,667.7 831.0,670.0 841.0,670.0 843.0,671.5 847.0,671.5 849.0,672.5 851.0,672.5 853.0,671.5 861.0,671.5 863.0,673.0 864.0,673.0 866.0,671.8 921.0,671.8 923.0,670.0 936.0,670.0 938.0,671.0 957.0,671.0 959.0,672.0 961.0,672.0 963.0,670.5 964.0,670.5 966.0,671.0 1011.0,671.0 1013.0,672.0 1026.0,672.0 1028.0,670.0 1041.0,670.0 1043.0,668.8 1047.0,668.8 1049.0,670.0 1055.0,670.0 1057.0,671.0 1092.0,671.0 1094.0,671.8 1109.0,671.8 1111.0,670.8 1114.0,670.8 1116.0,673.0 1129.0,673.0 1131.0,671.8 1142.0,671.8 1144.0,673.0 1149.0,673.0 1151.0,674.0 1159.0,674.0 1161.0,675.0 1162.0,675.0 1164.0,674.0 1174.0,674.0 1176.0,675.0 1177.0,675.0 1179.0,674.0 1204.0,674.0" fill="none" stroke="#d414d4" stroke-width="1.8" stroke-linejoin="round"/>
<polyline points="101.0,697.0 102.5,703.8 173.0,703.8 176.0,700.5 256.0,700.5 258.5,697.0 1197.0,697.0 1201.0,703.8 1205.0,703.8" fill="none" stroke="#ff0000" stroke-width="2.6" stroke-linejoin="round"/>
</svg></body></html>
